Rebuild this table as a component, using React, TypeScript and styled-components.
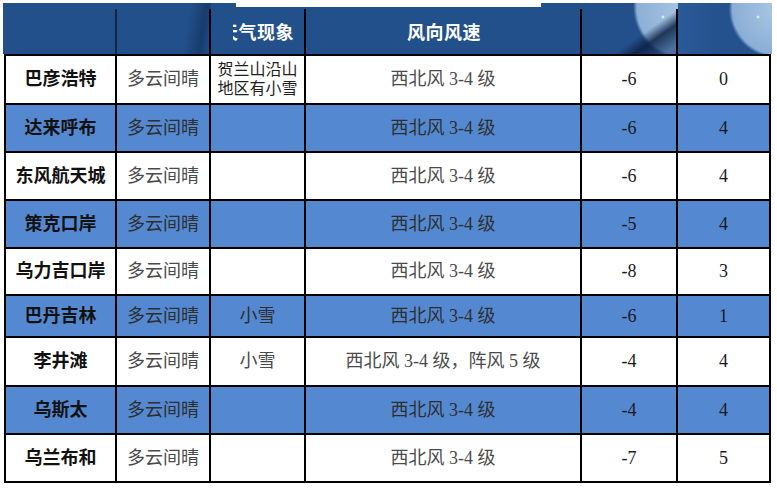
import React from "react";
import styled, { createGlobalStyle } from "styled-components";

const GlobalStyle = createGlobalStyle`
  html, body {
    margin: 0;
    padding: 0;
    background: #fff;
  }
  body {
    font-family: "Noto Sans CJK SC", "Noto Sans", sans-serif;
  }
  * {
    box-sizing: border-box;
  }
`;

const COLS = "111px 94px 95px 276px 96px 93px";

const Page = styled.div`
  position: relative;
  width: 777px;
  height: 490px;
  padding: 3px 0 0 3px;
  overflow: hidden;
  background: #fff;
`;

/* white notch cut into the top of the header */
const TopNotch = styled.div`
  position: absolute;
  left: 236px;
  top: 0;
  width: 305px;
  height: 7px;
  background: #fff;
`;

const HeaderBar = styled.div`
  display: grid;
  grid-template-columns: 114px 94px 95px 276px 96px 94px;
  width: 769px;
  height: 51px;
  background: #22508b;
`;

const HeaderCell = styled.div<{ $art?: "shade" | "globeA" | "globeB"; $line?: string; $align?: string }>`
  position: relative;
  display: flex;
  align-items: center;
  justify-content: ${(p) => p.$align || "center"};
  padding: 4px ${(p) => (p.$align ? "12px" : "0")} 0 0;
  color: #fff;
  font-weight: 700;
  font-size: 18px;
  letter-spacing: 0.5px;
  background: ${(p) =>
    p.$art === "shade"
      ? "linear-gradient(100deg, transparent 72%, rgba(14, 44, 86, 0.55) 88%, transparent 100%)"
      : p.$art === "globeA"
      ? `radial-gradient(circle 2px at 81px 14px, #ffffff 0%, rgba(255,255,255,0) 100%),
         linear-gradient(145deg, transparent 62%, rgba(12, 32, 66, 0.85) 74%, rgba(30, 70, 120, 0.6) 92%),
         radial-gradient(ellipse 62px 64px at 102px 4px, #a9c6e3 0%, #8cb0d6 76%, rgba(120,160,205,0) 82%),
         #234f8a`
      : p.$art === "globeB"
      ? `radial-gradient(circle 2px at 80px 14px, #ffffff 0%, rgba(255,255,255,0) 100%),
         radial-gradient(ellipse 60px 60px at 100px 6px, #abc8e4 0%, #8aaed5 76%, rgba(120,160,205,0) 82%),
         linear-gradient(90deg, #2a5a98 0%, #24528e 40%, #24528e 100%)`
      : "transparent"};

  &::after {
    content: "";
    position: absolute;
    right: 0;
    top: 6px;
    bottom: 0;
    width: 2px;
    background: ${(p) => p.$line || "transparent"};
  }
`;

const ClippedLabel = styled.span`
  display: inline-flex;
  justify-content: flex-end;
  width: 61px;
  overflow: hidden;
  white-space: nowrap;
`;

const Sheet = styled.div`
  margin-left: 1px;
  width: 767px;
  border-left: 2px solid #000;
  border-top: 2px solid #000;
`;

const Row = styled.div<{ $h: number; $blue: boolean }>`
  display: grid;
  grid-template-columns: ${COLS};
  height: ${(p) => p.$h}px;
  background: ${(p) => (p.$blue ? "#5489d2" : "#fff")};
  --soft: ${(p) => (p.$blue ? "#2e2e2e" : "#4a4a4a")};
`;

const Cell = styled.div<{ $kind: "name" | "text" | "note" | "num" }>`
  display: flex;
  align-items: center;
  justify-content: center;
  text-align: center;
  border-right: 2px solid #000;
  border-bottom: 2px solid #000;
  white-space: ${(p) => (p.$kind === "note" ? "pre-line" : "nowrap")};
  font-family: ${(p) =>
    p.$kind === "num"
      ? '"Liberation Serif", "Times New Roman", serif'
      : '"Liberation Serif", "Noto Sans CJK SC", serif'};
  font-size: ${(p) => (p.$kind === "note" ? "16px" : "18px")};
  line-height: ${(p) => (p.$kind === "note" ? "19px" : "20px")};
  font-weight: ${(p) => (p.$kind === "name" ? 700 : 400)};
  color: ${(p) =>
    p.$kind === "name" ? "#111" : p.$kind === "num" ? "#1a1a1a" : p.$kind === "note" ? "#1e1e1e" : "var(--soft)"};
  padding-bottom: 1px;
`;

type Rec = {
  name: string;
  sky: string;
  weather: string;
  wind: string;
  low: string;
  high: string;
  h: number;
};

const rows: Rec[] = [
  { name: "巴彦浩特", sky: "多云间晴", weather: "贺兰山沿山\n地区有小雪", wind: "西北风 3-4 级", low: "-6", high: "0", h: 49 },
  { name: "达来呼布", sky: "多云间晴", weather: "", wind: "西北风 3-4 级", low: "-6", high: "4", h: 48 },
  { name: "东风航天城", sky: "多云间晴", weather: "", wind: "西北风 3-4 级", low: "-6", high: "4", h: 48 },
  { name: "策克口岸", sky: "多云间晴", weather: "", wind: "西北风 3-4 级", low: "-5", high: "4", h: 48 },
  { name: "乌力吉口岸", sky: "多云间晴", weather: "", wind: "西北风 3-4 级", low: "-8", high: "3", h: 47 },
  { name: "巴丹吉林", sky: "多云间晴", weather: "小雪", wind: "西北风 3-4 级", low: "-6", high: "1", h: 42 },
  { name: "李井滩", sky: "多云间晴", weather: "小雪", wind: "西北风 3-4 级，阵风 5 级", low: "-4", high: "4", h: 49 },
  { name: "乌斯太", sky: "多云间晴", weather: "", wind: "西北风 3-4 级", low: "-4", high: "4", h: 48 },
  { name: "乌兰布和", sky: "多云间晴", weather: "", wind: "西北风 3-4 级", low: "-7", high: "5", h: 48 },
];

export default function App() {
  return (
    <Page>
      <GlobalStyle />
      <HeaderBar>
        <HeaderCell $line="#0f2748" />
        <HeaderCell $art="shade" $line="#000" />
        <HeaderCell $line="#000" $align="flex-end">
          <ClippedLabel>天气现象</ClippedLabel>
        </HeaderCell>
        <HeaderCell $line="#000">风向风速</HeaderCell>
        <HeaderCell $art="globeA" $line="#000" />
        <HeaderCell $art="globeB" />
      </HeaderBar>
      <TopNotch />
      <Sheet>
        {rows.map((r, i) => (
          <Row key={r.name} $h={r.h} $blue={i % 2 === 1}>
            <Cell $kind="name">{r.name}</Cell>
            <Cell $kind="text">{r.sky}</Cell>
            <Cell $kind={r.weather.includes("\n") ? "note" : "text"}>{r.weather}</Cell>
            <Cell $kind="text">{r.wind}</Cell>
            <Cell $kind="num">{r.low}</Cell>
            <Cell $kind="num">{r.high}</Cell>
          </Row>
        ))}
      </Sheet>
    </Page>
  );
}
